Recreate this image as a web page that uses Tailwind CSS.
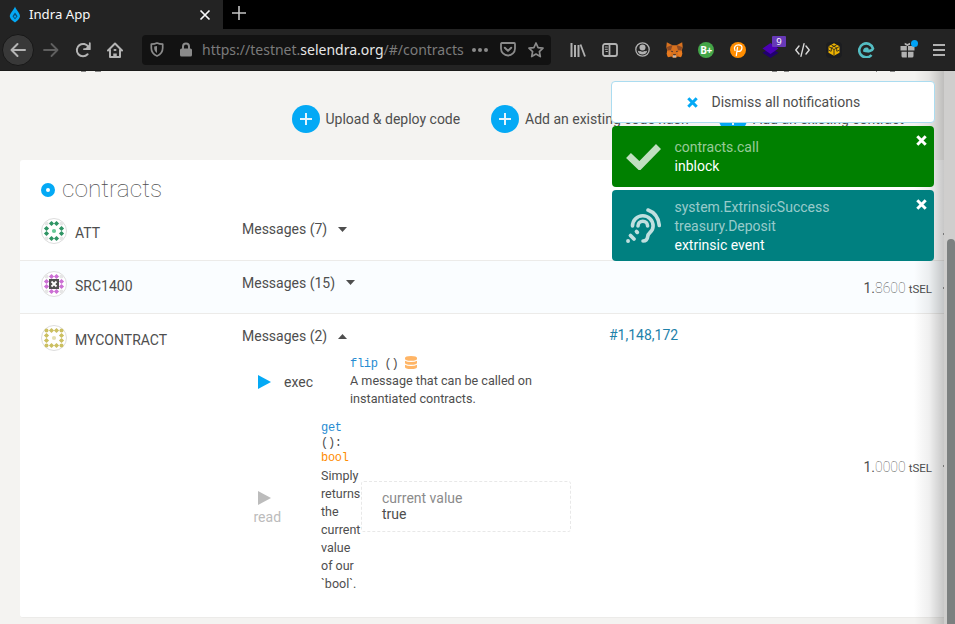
<!DOCTYPE html>
<html lang="en">
<head>
<meta charset="utf-8">
<title>Indra App</title>
<script src="https://cdn.jsdelivr.net/npm/@tailwindcss/browser@4"></script>
</head>
<body class="w-[955px] h-[624px] overflow-hidden bg-[#f4f3f1] text-[#4e4e4e] font-['Roboto',sans-serif] text-[14px] leading-[18px] flex flex-col">
<svg class="hidden">
  <defs>
    <path id="d" d="M0-2.600 2.600 0 0 2.600-2.600 0Z"/>
    <g id="ring"><use href="#d" x="10.5" y="5.5"/><use href="#d" x="15.5" y="5.5"/><use href="#d" x="10.5" y="20.5"/><use href="#d" x="15.5" y="20.5"/><use href="#d" x="5.5" y="10.5"/><use href="#d" x="5.5" y="15.5"/><use href="#d" x="20.5" y="10.5"/><use href="#d" x="20.5" y="15.5"/></g>
    <g id="corners"><circle cx="5.5" cy="5.5" r="2"/><circle cx="20.5" cy="5.5" r="2"/><circle cx="5.5" cy="20.5" r="2"/><circle cx="20.5" cy="20.5" r="2"/></g>
  </defs>
</svg>

<!-- Tab strip -->
<div class="h-[29px] shrink-0 bg-black flex font-['Noto_Sans',sans-serif]">
  <div class="w-[223px] bg-[#232323] flex items-center pl-[9px] pr-3 text-[#f9f9fa] text-[13.200px]">
    <svg width="12" height="17" viewBox="0 0 12 17"><path d="M6 .5C7 4 11.300 7 11 10.500 10.500 13 8 15 6 16.500 4 15 1 13 .8 10.500.7 7 5 4 6 .5Z" fill="#04a9f5"/><path d="M6 6.500 8.600 10.300 6 13.500 3.500 10.300Z" fill="#0b4c78"/><path d="m6 9 1.300 1.500L6 12 4.700 10.500Z" fill="#04a9f5"/></svg>
    <span class="ml-2 -mt-px grow">Indra App</span>
    <svg width="12" height="12" viewBox="0 0 12 12" stroke="#f9f9fa" stroke-width="1.700"><path d="m1.500 1.500 9 9m0-9-9 9"/></svg>
  </div>
  <svg class="ml-[9px] mt-[6px]" width="14" height="14" viewBox="0 0 14 14" stroke="#c4c4c4" stroke-width="1.600"><path d="M7 0v14M0 7h14"/></svg>
</div>

<!-- Navigation bar -->
<div class="h-[42px] shrink-0 bg-[#232323] flex items-center font-['Noto_Sans',sans-serif] border-b border-[#1a1a1a]">
  <div class="flex items-center pl-[2px] text-[#b4b4b4]">
    <div class="size-8 rounded-full bg-[#383838] border border-[#181818] flex items-center justify-center">
      <svg width="16" height="16" viewBox="0 0 16 16" fill="none" stroke="currentColor" stroke-width="2" stroke-linecap="round" stroke-linejoin="round"><path d="M15 8H1.500M7.500 2 1.500 8l6 6"/></svg>
    </div>
    <div class="w-8 flex justify-center text-[#5f5f5f] ml-px"><svg width="16" height="16" viewBox="0 0 16 16" fill="none" stroke="currentColor" stroke-width="1.800" stroke-linecap="round" stroke-linejoin="round"><path d="M1 8h13.500M8.500 2l6 6-6 6"/></svg></div>
    <div class="w-8 flex justify-center"><svg width="16" height="16" viewBox="0 0 16 16" fill="none" stroke="currentColor" stroke-width="2" stroke-linecap="round"><path d="M12.600 12.300A6.200 6.200 0 1 1 13.400 5"/><path d="M14.800 1.200v6H9" stroke-linejoin="round" stroke-width="1.800"/><path d="M14.500 2v5H10Z" fill="currentColor" stroke="none"/></svg></div>
    <div class="w-8 flex justify-center"><svg width="16" height="16" viewBox="0 0 16 16" fill="none" stroke="currentColor" stroke-width="2" stroke-linecap="round" stroke-linejoin="round"><path d="M1 8.500 8 1.500l7 7M3 8v7h10V8"/><path d="M8 15v-3.500" stroke-width="3.500" stroke-linecap="butt"/><path d="M7.500 8h1"/></svg></div>
  </div>
  <div class="ml-[11px] w-[409px] h-[30px] rounded bg-[#121212] flex items-center pl-2 text-[#8a8a8a]">
    <svg width="14" height="15" viewBox="0 0 14 15" fill="none" stroke="currentColor" stroke-width="1.700" stroke-linejoin="round"><path d="M7 1C5 2 3 2.200 1.300 2.200V6c0 4 2 6.500 5.700 8 3.700-1.500 5.700-4 5.700-8V2.200C11 2.200 9 2 7 1Z"/><path d="M7 4v7C5 9.800 4.300 8 4.200 6V4.500Z" fill="currentColor" stroke="none"/></svg>
    <svg class="ml-4" width="12" height="15" viewBox="0 0 12 15"><path d="M3 7V4.500a3 3 0 0 1 6 0V7" fill="none" stroke="currentColor" stroke-width="2"/><rect y="6.500" width="12" height="8" rx="1.500" fill="currentColor"/></svg>
    <span class="ml-[10px] w-[270px] whitespace-nowrap text-[14px] text-[#7b7b7b]">https://testnet.<span class="text-[#e6e6e6]">selendra.org</span>/#/contracts</span>
    <svg width="16" height="4" viewBox="0 0 16 4" fill="currentColor"><circle cx="2" cy="2" r="2"/><circle cx="8" cy="2" r="2"/><circle cx="14" cy="2" r="2"/></svg>
    <svg class="ml-3" width="16" height="15" viewBox="0 0 16 15" fill="none" stroke="currentColor" stroke-width="1.800" stroke-linecap="round" stroke-linejoin="round"><path d="M1.800 1h12.400q.8 0 .8.900V6.500a7 7 0 0 1-14 0V1.900Q1 1 1.800 1Z"/><path d="m4.800 5.700 3.200 3.200 3.200-3.200" stroke-width="2"/></svg>
    <svg class="ml-3" width="16" height="16" viewBox="0 0 16 16" fill="none" stroke="currentColor" stroke-width="1.700" stroke-linejoin="round"><path d="m8 1 2.100 4.600 4.900.6-3.600 3.400.9 5L8 12.100l-4.300 2.500.9-5L1 6.200l4.900-.6Z"/></svg>
  </div>
  <div class="flex ml-[11px] text-[#b1b1b1] items-center">
    <div class="w-8 flex justify-center"><svg width="16" height="14" viewBox="0 0 16 14" fill="none" stroke="currentColor" stroke-width="2"><path d="M1.500 0v14M5 2v12M8.500 2v12"/><path d="m10.500 1.500 4.500 12" stroke-width="1.800"/></svg></div>
    <div class="w-8 flex justify-center"><svg width="16" height="14" viewBox="0 0 16 14" fill="none" stroke="currentColor" stroke-width="1.800"><rect x="1" y="1" width="14" height="12" rx="2"/><path d="M7.500 1v12"/><path d="M2.800 4h3M2.800 6.300h3M3.500 8.500h2.300" stroke-width="1"/></svg></div>
    <div class="w-8 flex justify-center"><svg width="15" height="15" viewBox="0 0 15 15"><circle cx="7.500" cy="7.500" r="6.700" fill="none" stroke="currentColor" stroke-width="1.300"/><circle cx="7.500" cy="5.500" r="3" fill="currentColor"/><path d="M2.800 8.500c1 1 2 .8 2.500.6 1 .9 3.400.9 4.400 0 .5.200 1.500.4 2.500-.6-.3 2.500-2 4-4.700 4s-4.400-1.500-4.700-4Z" fill="currentColor"/></svg></div>
    <div class="w-8 flex justify-center"><svg width="17" height="16" viewBox="0 0 17 16"><path d="m.8.300 5.700 3h4l5.700-3 .5 4.700-1 4 .6 3-1.300 3.300-3.500-.8-1.500 1.200H7L5.500 14.500 2 15.300.7 12l.6-3-1-4Z" fill="#d7711f"/><path d="m1 5 4-1.500L6.500 3.300 5 8 1.500 8.500ZM16 5l-4-1.500-1.500-.2L12 8l3.500.5Z" fill="#8d4b24"/><path d="m1 9 4.500 1-1 4L2 15 .8 12ZM16 9l-4.500 1 1 4 2.500 1 1.200-3Z" fill="#e87a1e"/><path d="m4.500 8.700 2.500.2-.7 1.300ZM12.500 8.700l-2.500.2.700 1.300Z" fill="#322d32"/><path d="m7 13.200 1.500-.5 1.500.5.200 2.200H6.800Z" fill="#c7b9ae"/><path d="M7 12.300h3l-.5.9h-2Z" fill="#292222"/></svg></div>
    <div class="w-8 flex justify-center"><div class="size-4 rounded-full bg-[#43a548] text-white text-[10px] font-bold leading-4 text-center tracking-[-0.5px]">B+</div></div>
    <div class="w-8 flex justify-center"><svg width="16" height="16" viewBox="0 0 16 16"><circle cx="8" cy="8" r="8" fill="#ff8d00"/><path d="M7.500 5.500 6.300 13.500M5 8.500C3 5 6 2.800 8.500 2.800c2.500 0 3.800 1.500 3.400 3.500-.4 2.200-2.300 3.300-4.300 3" fill="none" stroke="#fff" stroke-width="1.300" stroke-linecap="round"/></svg></div>
    <div class="w-8 flex justify-center relative"><svg width="17" height="16" viewBox="0 0 17 16"><path d="m8.500 6 8 4.700L8.500 16l-8-5.300Z" fill="#21006f"/><path d="m8.500 1 8 5.500L8.500 12l-8-5.500Z" fill="#4b00b5"/></svg>
      <div class="absolute left-[18px] -top-[6px] w-[14px] h-[11px] rounded-[1px] bg-[#6739b7] text-white text-[9.5px] leading-[11px] text-center">9</div></div>
    <div class="w-8 flex justify-center"><svg width="15" height="14" viewBox="0 0 15 14" fill="none" stroke="#d8d8d8" stroke-width="1.400" stroke-linecap="round" stroke-linejoin="round"><path d="M4 3 .8 7 4 11M11 3l3.200 4L11 11M9 .8 6 13.200"/></svg></div>
    <div class="w-8 flex justify-center"><div class="size-4 rounded-sm bg-[#1c1d20] flex items-center justify-center"><svg width="12" height="13" viewBox="0 0 12 13"><path d="m6 .3 5.500 3v6.400L6 12.700.5 9.700V3.300Z" fill="#efb400"/><path d="M.5 3.500 6 6.500l5.500-3M6 6.500v6M3.300 1.800l5.400 3M8.700 1.800l-5.400 3M3.300 5v3M8.700 5v3M.5 7l2.800 1.500M11.500 7 8.700 8.500" stroke="#1c1d20" stroke-width=".8" fill="none"/></svg></div></div>
    <div class="w-8 flex justify-center"><svg width="17" height="16" viewBox="0 0 17 16"><path d="M13.500 13A7 7 0 1 1 15 6.500C14 9.500 10 9.500 7.500 8.500" fill="none" stroke="#54bdc3" stroke-width="2.600"/><path d="M5 9.500C5 6.500 7 5 9 5.500c1.500.3 1.800 1.300 1.500 2l4 .5c-1.500 2.500-6 3-9.500 1.500Z" fill="#54bdc3"/></svg></div>
    <div class="ml-[18px] w-[15px] relative"><svg width="15" height="16" viewBox="0 0 15 16" fill="#b1b1b1"><path d="M.5 4h6.300v4.500H.5ZM8 4h6.500v4.500H8ZM1.500 9.700h5.300V15.500H3q-1.500 0-1.500-1.500ZM8 9.700h5.500V14q0 1.500-1.500 1.500H8ZM4.700.8 7.400 2 10 .8v2L7.400 4 4.700 2.800Z"/></svg>
      <div class="absolute -right-[3px] -top-[2px] size-[7px] rounded-full bg-[#00a2f5]"></div></div>
    <svg class="ml-[18px]" width="12" height="12" viewBox="0 0 12 12" stroke="currentColor" stroke-width="2"><path d="M0 1h12M0 6h12M0 11h12"/></svg>
  </div>
</div>

<!-- Page viewport -->
<div class="relative grow flex overflow-hidden">
  <main class="w-[944px] shrink-0 pl-5 flex flex-col">
    <div class="h-[89px] shrink-0 flex pl-[272px] pt-[34px] items-start whitespace-nowrap">
      <div class="flex items-center w-[199px]"><svg width="28" height="28" viewBox="0 0 28 28"><circle cx="14" cy="14" r="14" fill="#04a9f5"/><path d="M14 8v12M8 14h12" stroke="#e3f4fd" stroke-width="2"/></svg><span class="ml-[5.500px] -mt-px">Upload &amp; deploy code</span></div>
      <div class="flex items-center w-[228px]"><svg width="28" height="28" viewBox="0 0 28 28"><circle cx="14" cy="14" r="14" fill="#04a9f5"/><path d="M14 8v12M8 14h12" stroke="#e3f4fd" stroke-width="2"/></svg><span class="ml-[6px] -mt-px">Add an existing code hash</span></div>
      <div class="flex items-center"><svg width="28" height="28" viewBox="0 0 28 28"><circle cx="14" cy="14" r="14" fill="#04a9f5"/><path d="M14 8v12M8 14h12" stroke="#e3f4fd" stroke-width="2"/></svg><span class="ml-[6px] -mt-px">Add an existing contract</span></div>
    </div>

    <section class="h-[458px] shrink-0 bg-white pt-px border-b border-[#ecebe9] rounded-l-[3px]">
      <h1 class="h-[47px] pl-[21px] pt-[10px] flex items-center font-thin text-[24.500px] leading-[36px]"><span class="size-[14px] rounded-full border-[5px] border-[#04a9f5] mr-[7px]"></span><span class="-mt-[2px]">contracts</span></h1>

      <div class="h-[53px] border-b border-[#ecebe9] flex">
        <div class="w-[201px] ml-[21px] pt-[10px] flex items-start"><svg width="26" height="26" viewBox="0 0 26 26"><circle cx="13" cy="13" r="12.500" fill="#fff" stroke="#ddd"/><use href="#ring" fill="#2f9464"/><use href="#corners" fill="#e6e6e6"/><circle cx="13" cy="13" r="2.100" fill="#66c997"/></svg><span class="ml-2 mt-[6px]">ATT</span></div>
        <div class="w-[367px] pt-[12px] flex items-start"><span>Messages (7)</span><svg class="ml-[11px] mt-[7px]" width="9" height="5"><path d="M0 0h9L4.500 5Z" fill="#4e4e4e"/></svg></div>
      </div>

      <div class="h-[53px] border-b border-[#ecebe9] bg-[#fafdff] flex">
        <div class="w-[201px] ml-[21px] pt-[10px] flex items-start"><svg width="26" height="26" viewBox="0 0 26 26"><circle cx="13" cy="13" r="12.500" fill="#fff" stroke="#ddd"/><use href="#ring" fill="#cc70d4"/><use href="#corners" fill="#e6e6e6"/><rect x="8" y="8" width="10" height="10" fill="#505050"/><path d="m10.500 10.500 5 5m0-5-5 5" stroke="#fff" stroke-width="1.800"/></svg><span class="ml-2 mt-[6px]">SRC1400</span></div>
        <div class="w-[367px] pt-[13px] flex items-start"><span>Messages (15)</span><svg class="ml-[11px] mt-[6px]" width="9" height="5"><path d="M0 0h9L4.500 5Z" fill="#4e4e4e"/></svg></div>
        <div class="grow pt-[18px] flex items-baseline justify-end pr-3 whitespace-nowrap"><span>1.</span><span class="font-thin">8600</span><span class="ml-[3px] text-[11.500px]">tSEL</span></div>
      </div>

      <div class="h-[303px] flex">
        <div class="w-[201px] ml-[21px] pt-[11px] flex items-start"><svg width="26" height="26" viewBox="0 0 26 26"><circle cx="13" cy="13" r="12.500" fill="#fff" stroke="#ddd"/><g fill="#cbbf61"><use href="#ring"/><use href="#corners"/></g><circle cx="13" cy="13" r="2.100" fill="#e4dfb0"/></svg><span class="ml-2 mt-[6px]">MYCONTRACT</span></div>
        <div class="w-[367px] pt-[13px]">
          <div class="flex items-start h-[27px]"><span>Messages (2)</span><svg class="ml-[11px] mt-[7px]" width="9" height="5"><path d="M0 5h9L4.500 0Z" fill="#4e4e4e"/></svg></div>
          <div class="flex h-[66px]">
            <div class="w-[108px] pl-[16px] pt-[19px] flex items-start"><svg class="mt-[2px]" width="13" height="14"><path d="M0 0v14L13 7Z" fill="#04a9f5"/></svg><span class="ml-[13px]">exec</span></div>
            <div class="text-[12.600px] leading-[18px] w-[200px]">
              <div class="h-[18px] flex items-center font-['Liberation_Mono',monospace] text-[12px] tracking-[-0.3px] pt-px"><span class="text-[#268bd2]">flip</span><span class="ml-[7px]">()</span><svg class="ml-[7px] -mt-[3px]" width="12" height="13" viewBox="0 0 12 13" fill="#ffb566"><path d="M0 2Q0 0 6 0t6 2v.8q0 2-6 2t-6-2ZM0 4.700q2 1.300 6 1.300t6-1.300v2q0 2-6 2t-6-2ZM0 8.700Q2 10 6 10t6-1.300V11q0 2-6 2t-6-2Z"/></svg></div>
              <p>A message that can be called on<br>instantiated contracts.</p>
            </div>
          </div>
          <div class="flex h-[173px]">
            <div class="w-[79px] pl-[12px] pt-[71px] text-[#bcbcbc]"><svg class="ml-1" width="13" height="14"><path d="M0 0v14L13 7Z" fill="currentColor"/></svg><div class="mt-[3px] -ml-[0.500px]">read</div></div>
            <div class="w-[40px] text-[12.500px] leading-[18px] whitespace-nowrap">
              <div class="font-['Liberation_Mono',monospace] text-[12px] tracking-[-0.3px] leading-[15px] pt-px h-[47px]"><span class="text-[#268bd2]">get</span><br>():<br><span class="text-[#ff8c00]">bool</span></div>
              <p>Simply<br>returns<br>the<br>current<br>value<br>of our<br>`bool`.</p>
            </div>
            <div class="mt-[61px] w-[210px] h-[51px] border border-dashed border-[#e8e8e8] rounded-[3px] pl-5 pt-2 leading-4"><div class="text-[#8b8b8b]">current value</div><div>true</div></div>
          </div>
        </div>
        <div class="w-[120px] pt-[12px] text-[#1f82aa]">#1,148,172</div>
        <div class="grow pt-[144px] flex items-baseline justify-end pr-3 whitespace-nowrap"><span>1.</span><span class="font-thin">0000</span><span class="ml-[3px] text-[11.500px]">tSEL</span></div>
      </div>
    </section>
  </main>

  <!-- Scrollbar with the edge shadow beside it -->
  <div class="w-[11px] bg-[#cfcecd] pl-[3px] pt-[168px]"><div class="h-[500px] rounded-t-[4px] bg-[#7c8080]"></div></div>
  <div class="absolute left-[914px] top-0 w-[30px] h-full bg-linear-to-r from-black/0 via-black/6 to-black/22"></div>
  <div class="absolute left-0 top-0 w-full h-[2px]"><span class="absolute left-[81px] w-[5px] h-px bg-[#888]"></span><span class="absolute left-[95px] w-[6px] h-px bg-[#888]"></span><span class="absolute left-[772px] w-[5px] h-px bg-[#888]"></span><span class="absolute left-[784px] w-[5px] h-px bg-[#888]"></span><span class="absolute left-[876px] w-px h-px bg-[#888]"></span><span class="absolute left-[890px] w-[5px] h-px bg-[#888]"></span></div>
  <div class="absolute left-[943px] top-0 w-px h-full"><i class="absolute top-[162px] w-px h-[2px] bg-[#777]"></i><i class="absolute top-[216px] w-px h-[2px] bg-[#777]"></i><i class="absolute top-[394px] w-px h-[2px] bg-[#777]"></i></div>

  <!-- Notifications -->
  <div class="absolute left-[611px] top-[10px] w-[324px] flex flex-col">
    <div class="h-[42px] bg-white border border-[#abdcf0] rounded flex items-center pl-[74.500px]"><svg width="11" height="11" viewBox="0 0 11 11" stroke="#04a9f5" stroke-width="3"><path d="m1.300 1.300 8.400 8.400m0-8.400-8.400 8.400"/></svg><span class="ml-[14px] -mt-px">Dismiss all notifications</span></div>
    <div class="mt-[3px] ml-px mr-px h-[61px] bg-[#008000] rounded flex text-white leading-[19px] pt-3 relative">
      <svg class="ml-[14px] mt-[5px]" width="35" height="27" viewBox="0 0 35 27"><path d="m2.500 12.500 11 10.500L32.500 3.500" fill="none" stroke="#c0dfc0" stroke-width="7"/></svg>
      <div class="ml-[13.500px]"><div class="text-white/60">contracts.call</div><div>inblock</div></div>
      <svg class="absolute right-[7px] top-[9px]" width="11" height="11" viewBox="0 0 11 11" stroke="#fff" stroke-width="3"><path d="m1.300 1.300 8.400 8.400m0-8.400-8.400 8.400"/></svg>
    </div>
    <div class="mt-[3px] ml-px mr-px h-[71px] bg-[#008080] rounded flex text-white leading-[19px] pt-2 relative">
      <svg class="ml-[14px] mt-[10px]" width="35" height="35" viewBox="0 0 35 35" fill="none" stroke="#c0dfdf" stroke-width="3.600" stroke-linecap="round"><path d="M6.500 18a10.300 10.300 0 0 1 20.600 0c0 6.500-5 6-5.400 10.500-.3 3-2 4.500-4.700 4.500"/><path d="M12 18a4.800 4.800 0 0 1 9.600 0"/><path d="M22 2c6.500 2.300 10.500 7 11.300 15.500"/><path d="m4.500 27.500 3.500 3.500M10.500 23.500l.8.800M2 33h.1" stroke-width="3.800"/></svg>
      <div class="ml-[13.500px]"><div class="text-white/60">system.ExtrinsicSuccess<br>treasury.Deposit</div><div>extrinsic event</div></div>
      <svg class="absolute right-[7px] top-[9px]" width="11" height="11" viewBox="0 0 11 11" stroke="#fff" stroke-width="3"><path d="m1.300 1.300 8.400 8.400m0-8.400-8.400 8.400"/></svg>
    </div>
  </div>
</div>
</body>
</html>
